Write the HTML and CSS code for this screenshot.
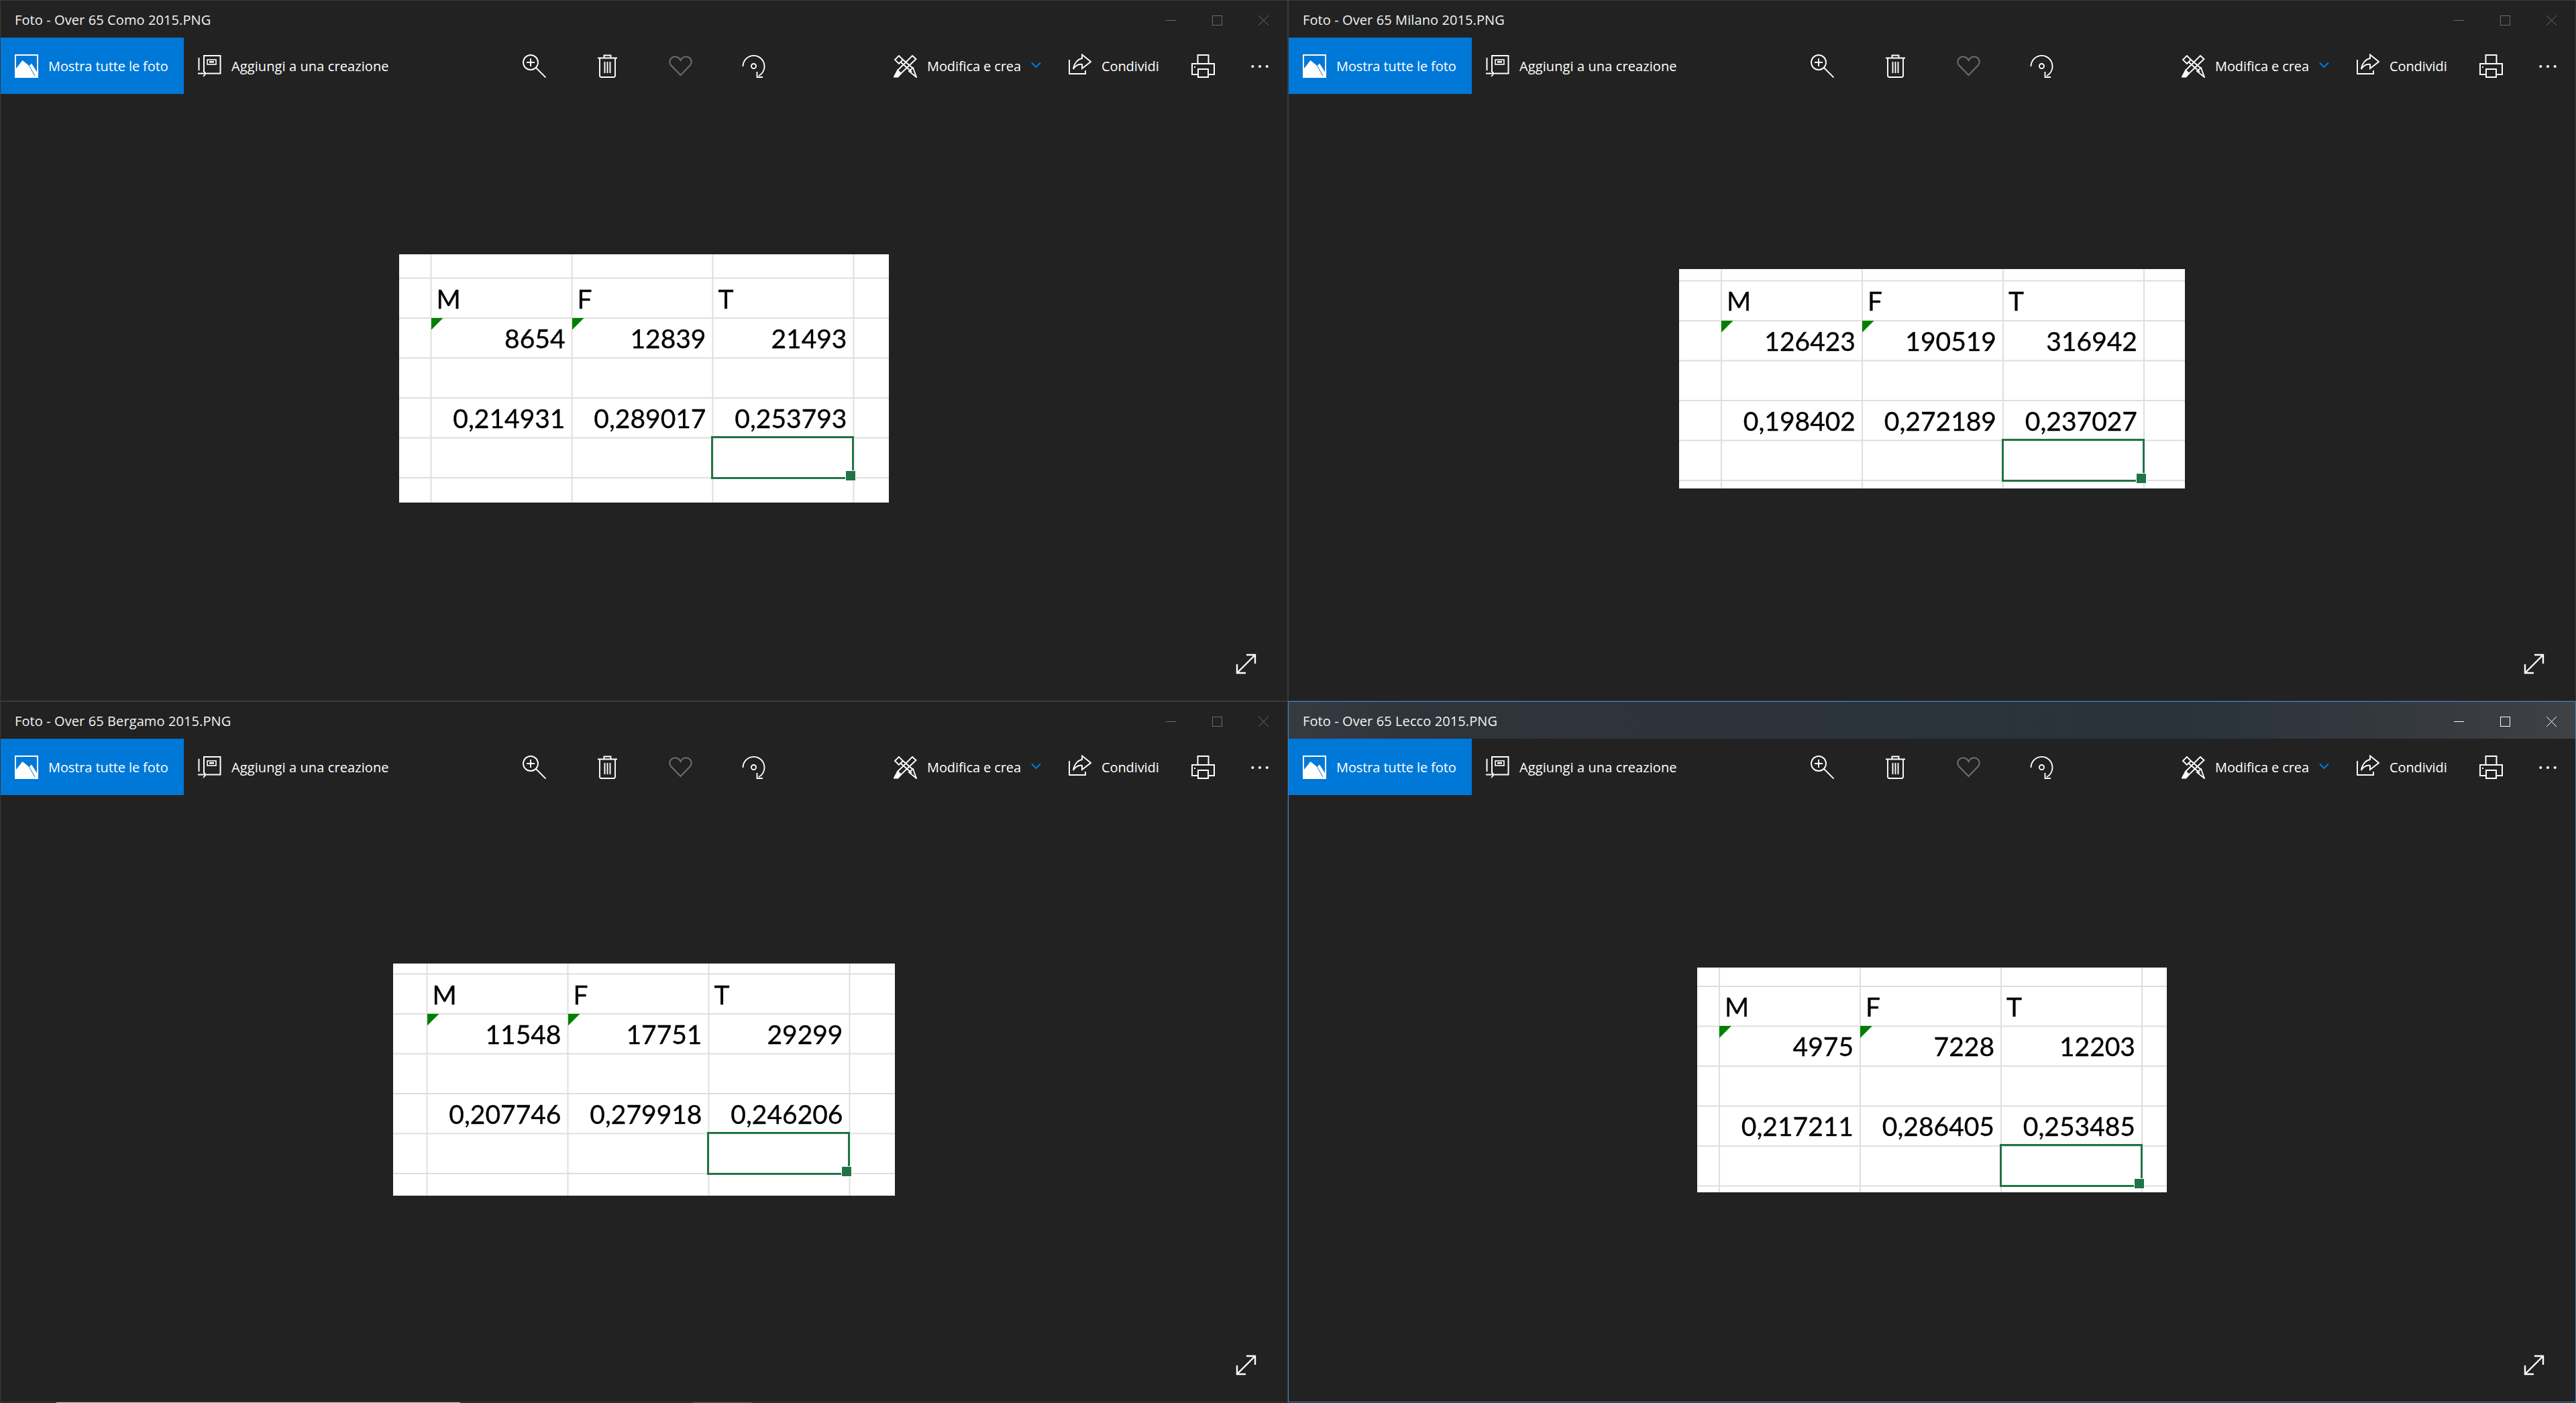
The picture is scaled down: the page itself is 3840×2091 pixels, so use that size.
FILE: index.html
```html
<!DOCTYPE html>
<html lang="it">
<head>
<meta charset="utf-8">
<title>Foto</title>
<link rel="stylesheet" href="styles.css">
</head>
<body>
<svg class="defs" aria-hidden="true">
  <symbol id="i-photos" viewBox="0 0 35 35">
    <rect width="35" height="35" fill="#fff"/>
    <polygon points="2,2 33,2 33,26 25,13.5 21.5,17 11.5,9 2,21" fill="#0078d7"/>
    <line x1="20" y1="14.5" x2="30" y2="32" stroke="#0078d7" stroke-width="1"/>
  </symbol>
  <symbol id="i-add" viewBox="0 0 35 35">
    <path d="M9 25V2H33.500V28.500H13M1.500 5V24" fill="none" stroke="#fff" stroke-width="2"/>
    <rect x="14" y="8" width="13" height="7" fill="none" stroke="#fff" stroke-width="1.600"/>
    <rect x="17" y="10" width="7" height="2.500" fill="#fff"/>
    <path d="M0 28.500H12M8 24.500L12 28.500L8 33" fill="none" stroke="#fff" stroke-width="1.800"/>
  </symbol>
  <symbol id="i-zoom" viewBox="0 0 35 35">
    <g fill="none" stroke="#fff" stroke-width="1.900">
      <circle cx="12" cy="12" r="11"/>
      <path d="M12 6V18M6 12H18M20 20L34.500 34.500"/>
    </g>
  </symbol>
  <symbol id="i-trash" viewBox="0 0 29 35">
    <g fill="none" stroke="#fff" stroke-width="1.900">
      <path d="M0 5.500H29M9.500 5V1.500H19.500V5"/>
      <path d="M3 5.500V31.500Q3 34 5.500 34H23.500Q26 34 26 31.500V5.500"/>
      <path d="M10.500 11V28M14.500 11V28M18.500 11V28"/>
    </g>
  </symbol>
  <symbol id="i-heart" viewBox="0 0 35 31">
    <path d="M17.500 29L3 14C-1.500 7.500 4 1 10 1.500C13 1.700 16 3.800 17.500 7C19 3.800 22 1.700 25 1.500C31 1 36.500 7.500 32 14Z" fill="none" stroke="#6e6e6e" stroke-width="2"/>
  </symbol>
  <symbol id="i-rotate" viewBox="0 0 35 35">
    <g fill="none" stroke="#fff" stroke-width="1.900">
      <path d="M1.500 18A16 16 0 1 1 25 32"/>
      <path d="M22.500 26V34H31"/>
      <circle cx="17.500" cy="17.500" r="3.500"/>
    </g>
  </symbol>
  <symbol id="i-edit" viewBox="0 0 35 35">
    <g fill="none" stroke="#fff" stroke-width="1.900">
      <path d="M28 2L33.500 7L11 28.500L6 24Z"/>
      <path d="M6 24L11 28.500L6.500 33.500H1Z" fill="#fff"/>
      <path d="M2 8L8 2L14 8L8 14Z"/>
      <path d="M10.500 11.500L27 26M14 8L29 21"/>
      <path d="M23 25L29 20L34 34Z"/>
    </g>
  </symbol>
  <symbol id="i-share" viewBox="0 0 34 31">
    <g fill="none" stroke="#fff" stroke-width="1.900">
      <path d="M1 9V30H25V25"/>
      <path d="M7 23C8 14 14 8 20 7V1.500L33 12L20 22V16C14 15 10 18 7 23Z"/>
    </g>
  </symbol>
  <symbol id="i-print" viewBox="0 0 35 35">
    <g fill="none" stroke="#fff" stroke-width="2">
      <path d="M9.500 14V1H25.500V14"/>
      <rect x="1" y="14" width="33" height="16"/>
      <rect x="10" y="22" width="15" height="12" fill="#222"/>
    </g>
    <rect x="4" y="18" width="2" height="2" fill="#fff"/>
  </symbol>
  <symbol id="i-chevron" viewBox="0 0 15 10">
    <path d="M1 1.500L7.500 8L14 1.500" fill="none" stroke="#0078d7" stroke-width="2.200"/>
  </symbol>
  <symbol id="i-dots" viewBox="0 0 26 6">
    <circle cx="2.300" cy="3" r="2.100" fill="#fff"/>
    <circle cx="13" cy="3" r="2.100" fill="#fff"/>
    <circle cx="23.700" cy="3" r="2.100" fill="#fff"/>
  </symbol>
  <symbol id="i-expand" viewBox="0 0 31 31">
    <path d="M2 29L29 2M16 2H29V15M2 16V29H15" fill="none" stroke="#fff" stroke-width="2.400"/>
  </symbol>
  <symbol id="i-min" viewBox="0 0 15 15"><path d="M0 7.500H15" fill="none" stroke="currentColor"/></symbol>
  <symbol id="i-max" viewBox="0 0 15 15"><rect x=".5" y=".5" width="14" height="14" fill="none" stroke="currentColor"/></symbol>
  <symbol id="i-close" viewBox="0 0 15 15"><path d="M0 0L15 15M15 0L0 15" fill="none" stroke="currentColor"/></symbol>
</svg>

<main class="desktop">

  <section class="window">
    <header class="titlebar">
      <span class="title">Foto - Over 65 Como 2015.PNG</span>
      <div class="caption">
        <span class="cap"><svg class="ic-cap"><use href="#i-min"/></svg></span>
        <span class="cap"><svg class="ic-cap"><use href="#i-max"/></svg></span>
        <span class="cap"><svg class="ic-cap"><use href="#i-close"/></svg></span>
      </div>
    </header>
    <nav class="toolbar">
      <a class="tool tool-all"><svg class="ic35"><use href="#i-photos"/></svg><span class="label">Mostra tutte le foto</span></a>
      <a class="tool tool-add"><svg class="ic35"><use href="#i-add"/></svg><span class="label">Aggiungi a una creazione</span></a>
      <a class="btn btn-first"><svg class="ic35"><use href="#i-zoom"/></svg></a>
      <a class="btn"><svg class="ic-trash"><use href="#i-trash"/></svg></a>
      <a class="btn"><svg class="ic-heart"><use href="#i-heart"/></svg></a>
      <a class="btn"><svg class="ic35"><use href="#i-rotate"/></svg></a>
      <a class="tool tool-edit"><svg class="ic35"><use href="#i-edit"/></svg><span class="label">Modifica e crea</span><svg class="ic-chevron"><use href="#i-chevron"/></svg></a>
      <a class="tool tool-share"><svg class="ic-share"><use href="#i-share"/></svg><span class="label">Condividi</span></a>
      <a class="btn btn-print"><svg class="ic35"><use href="#i-print"/></svg></a>
      <a class="btn btn-more"><svg class="ic-dots"><use href="#i-dots"/></svg></a>
    </nav>
    <div class="stage">
      <div class="sheet sheet-como">
        <span class="cell head col-m">M</span><span class="cell head col-f">F</span><span class="cell head col-t">T</span>
        <span class="cell num col-m flagged">8654</span><span class="cell num col-f flagged">12839</span><span class="cell num col-t">21493</span>
        <span class="cell ratio col-m">0,214931</span><span class="cell ratio col-f">0,289017</span><span class="cell ratio col-t">0,253793</span>
        <span class="selected"></span>
      </div>
      <svg class="expand"><use href="#i-expand"/></svg>
    </div>
  </section>

  <section class="window">
    <header class="titlebar">
      <span class="title">Foto - Over 65 Milano 2015.PNG</span>
      <div class="caption">
        <span class="cap"><svg class="ic-cap"><use href="#i-min"/></svg></span>
        <span class="cap"><svg class="ic-cap"><use href="#i-max"/></svg></span>
        <span class="cap"><svg class="ic-cap"><use href="#i-close"/></svg></span>
      </div>
    </header>
    <nav class="toolbar">
      <a class="tool tool-all"><svg class="ic35"><use href="#i-photos"/></svg><span class="label">Mostra tutte le foto</span></a>
      <a class="tool tool-add"><svg class="ic35"><use href="#i-add"/></svg><span class="label">Aggiungi a una creazione</span></a>
      <a class="btn btn-first"><svg class="ic35"><use href="#i-zoom"/></svg></a>
      <a class="btn"><svg class="ic-trash"><use href="#i-trash"/></svg></a>
      <a class="btn"><svg class="ic-heart"><use href="#i-heart"/></svg></a>
      <a class="btn"><svg class="ic35"><use href="#i-rotate"/></svg></a>
      <a class="tool tool-edit"><svg class="ic35"><use href="#i-edit"/></svg><span class="label">Modifica e crea</span><svg class="ic-chevron"><use href="#i-chevron"/></svg></a>
      <a class="tool tool-share"><svg class="ic-share"><use href="#i-share"/></svg><span class="label">Condividi</span></a>
      <a class="btn btn-print"><svg class="ic35"><use href="#i-print"/></svg></a>
      <a class="btn btn-more"><svg class="ic-dots"><use href="#i-dots"/></svg></a>
    </nav>
    <div class="stage">
      <div class="sheet sheet-milano">
        <span class="cell head col-m">M</span><span class="cell head col-f">F</span><span class="cell head col-t">T</span>
        <span class="cell num col-m flagged">126423</span><span class="cell num col-f flagged">190519</span><span class="cell num col-t">316942</span>
        <span class="cell ratio col-m">0,198402</span><span class="cell ratio col-f">0,272189</span><span class="cell ratio col-t">0,237027</span>
        <span class="selected"></span>
      </div>
      <svg class="expand"><use href="#i-expand"/></svg>
    </div>
  </section>

  <section class="window">
    <header class="titlebar">
      <span class="title">Foto - Over 65 Bergamo 2015.PNG</span>
      <div class="caption">
        <span class="cap"><svg class="ic-cap"><use href="#i-min"/></svg></span>
        <span class="cap"><svg class="ic-cap"><use href="#i-max"/></svg></span>
        <span class="cap"><svg class="ic-cap"><use href="#i-close"/></svg></span>
      </div>
    </header>
    <nav class="toolbar">
      <a class="tool tool-all"><svg class="ic35"><use href="#i-photos"/></svg><span class="label">Mostra tutte le foto</span></a>
      <a class="tool tool-add"><svg class="ic35"><use href="#i-add"/></svg><span class="label">Aggiungi a una creazione</span></a>
      <a class="btn btn-first"><svg class="ic35"><use href="#i-zoom"/></svg></a>
      <a class="btn"><svg class="ic-trash"><use href="#i-trash"/></svg></a>
      <a class="btn"><svg class="ic-heart"><use href="#i-heart"/></svg></a>
      <a class="btn"><svg class="ic35"><use href="#i-rotate"/></svg></a>
      <a class="tool tool-edit"><svg class="ic35"><use href="#i-edit"/></svg><span class="label">Modifica e crea</span><svg class="ic-chevron"><use href="#i-chevron"/></svg></a>
      <a class="tool tool-share"><svg class="ic-share"><use href="#i-share"/></svg><span class="label">Condividi</span></a>
      <a class="btn btn-print"><svg class="ic35"><use href="#i-print"/></svg></a>
      <a class="btn btn-more"><svg class="ic-dots"><use href="#i-dots"/></svg></a>
    </nav>
    <div class="stage">
      <div class="sheet sheet-bergamo">
        <span class="cell head col-m">M</span><span class="cell head col-f">F</span><span class="cell head col-t">T</span>
        <span class="cell num col-m flagged">11548</span><span class="cell num col-f flagged">17751</span><span class="cell num col-t">29299</span>
        <span class="cell ratio col-m">0,207746</span><span class="cell ratio col-f">0,279918</span><span class="cell ratio col-t">0,246206</span>
        <span class="selected"></span>
      </div>
      <svg class="expand"><use href="#i-expand"/></svg>
    </div>
  </section>

  <section class="window window-active">
    <header class="titlebar">
      <span class="title">Foto - Over 65 Lecco 2015.PNG</span>
      <div class="caption">
        <span class="cap"><svg class="ic-cap"><use href="#i-min"/></svg></span>
        <span class="cap"><svg class="ic-cap"><use href="#i-max"/></svg></span>
        <span class="cap"><svg class="ic-cap"><use href="#i-close"/></svg></span>
      </div>
    </header>
    <nav class="toolbar">
      <a class="tool tool-all"><svg class="ic35"><use href="#i-photos"/></svg><span class="label">Mostra tutte le foto</span></a>
      <a class="tool tool-add"><svg class="ic35"><use href="#i-add"/></svg><span class="label">Aggiungi a una creazione</span></a>
      <a class="btn btn-first"><svg class="ic35"><use href="#i-zoom"/></svg></a>
      <a class="btn"><svg class="ic-trash"><use href="#i-trash"/></svg></a>
      <a class="btn"><svg class="ic-heart"><use href="#i-heart"/></svg></a>
      <a class="btn"><svg class="ic35"><use href="#i-rotate"/></svg></a>
      <a class="tool tool-edit"><svg class="ic35"><use href="#i-edit"/></svg><span class="label">Modifica e crea</span><svg class="ic-chevron"><use href="#i-chevron"/></svg></a>
      <a class="tool tool-share"><svg class="ic-share"><use href="#i-share"/></svg><span class="label">Condividi</span></a>
      <a class="btn btn-print"><svg class="ic35"><use href="#i-print"/></svg></a>
      <a class="btn btn-more"><svg class="ic-dots"><use href="#i-dots"/></svg></a>
    </nav>
    <div class="stage">
      <div class="sheet sheet-lecco">
        <span class="cell head col-m">M</span><span class="cell head col-f">F</span><span class="cell head col-t">T</span>
        <span class="cell num col-m flagged">4975</span><span class="cell num col-f flagged">7228</span><span class="cell num col-t">12203</span>
        <span class="cell ratio col-m">0,217211</span><span class="cell ratio col-f">0,286405</span><span class="cell ratio col-t">0,253485</span>
        <span class="selected"></span>
      </div>
      <svg class="expand"><use href="#i-expand"/></svg>
    </div>
  </section>

</main>
<div class="taskbar-edge"></div>
</body>
</html>
```
FILE: styles.css
```css
* { box-sizing: border-box; }

html, body {
  margin: 0;
  width: 3840px;
  height: 2091px;
  overflow: hidden;
  background: #1a1a1a;
}

.defs { width: 0; height: 0; display: block; }

.desktop {
  display: grid;
  grid-template-columns: 1920px 1920px;
  grid-template-rows: 1045px 1045px;
}

.taskbar-edge {
  height: 1px;
  background: linear-gradient(90deg,
    #2a221c 0 84px, #cfcfcf 84px 686px, #2a221c 686px 1033px,
    #555 1033px 1120px, #2a221c 1120px 100%);
}

/* window */
.window {
  display: flex;
  flex-direction: column;
  border: 1px solid #3a3a3a;
  background: #222;
  color: #fff;
  font-family: "Open Sans", "Noto Sans", sans-serif;
}

.window-active { border-color: #3b87c9; }

.titlebar {
  height: 55px;
  flex: none;
  display: flex;
  align-items: center;
  justify-content: space-between;
  padding-left: 21px;
  color: #6b6b6b;
}

.window-active .titlebar {
  color: #fff;
  background: linear-gradient(90deg, #353b41 0, #2e343a 10%, #2a333a 70%, #383b41 92%, #3f4145 100%);
}

.title {
  color: #f2f2f2;
  font-size: 20px;
  letter-spacing: 0.1px;
  padding-top: 2px;
}

.caption { display: flex; padding-right: 1px; }

.cap {
  width: 69px;
  height: 55px;
  display: flex;
  align-items: center;
  justify-content: center;
  padding-top: 4px;
}

.ic-cap { width: 15px; height: 15px; display: block; }

/* toolbar */
.toolbar {
  height: 84px;
  flex: none;
  display: flex;
  align-items: center;
}

.tool {
  height: 84px;
  display: flex;
  align-items: center;
  padding-left: 21px;
  flex: none;
}

.label {
  font-size: 20px;
  letter-spacing: -0.1px;
  white-space: nowrap;
  display: block;
}

.tool-all { width: 273px; background: #0078d7; }
.tool-all .label { margin-left: 15px; }

.tool-add { width: 326px; }
.tool-add .label { margin-left: 15px; letter-spacing: 0.1px; }

.btn {
  width: 109px;
  height: 84px;
  flex: none;
  display: flex;
  align-items: center;
  justify-content: center;
}

.btn-first { margin-left: 142px; }

.tool-edit { width: 261px; margin-left: 133px; }
.tool-edit .label { margin-left: 15px; width: 140px; }

.tool-share { width: 178px; }
.tool-share .label { margin-left: 15px; }

.btn-print { width: 87px; }
.btn-more { width: 82px; }

.ic35 { width: 35px; height: 35px; display: block; flex: none; }
.ic-trash { width: 29px; height: 35px; display: block; }
.ic-heart { width: 35px; height: 31px; display: block; }
.ic-share { width: 34px; height: 31px; display: block; flex: none; margin-bottom: 5px; }
.ic-chevron { width: 15px; height: 10px; display: block; margin-left: 15px; flex: none; margin-top: -2px; }
.ic-dots { width: 26px; height: 6px; display: block; margin-top: 2px; }

/* image area */
.stage {
  flex: 1;
  position: relative;
  display: flex;
  align-items: center;
  justify-content: center;
  padding-bottom: 56px;
}

.expand {
  position: absolute;
  right: 46px;
  bottom: 39px;
  width: 31px;
  height: 31px;
}

/* spreadsheet screenshot */
.sheet {
  --grid: #dedede;
  flex: none;
  display: grid;
  grid-template-columns: var(--x) repeat(3, 210px) 1fr;
  grid-template-rows: var(--y) repeat(5, 59.5px) 1fr;
  color: #000;
  font-family: Lato, "Liberation Sans", sans-serif;
  font-size: 39px;
  background-color: #fff;
  background-image:
    linear-gradient(90deg, var(--grid) 2px, transparent 2px),
    linear-gradient(180deg, var(--grid) 2px, transparent 2px);
  background-size: 210px 100%, 100% 59.5px;
  background-position: var(--x) 0, 0 var(--y);
  background-repeat: repeat-x, repeat-y;
}

.sheet-como    { width: 730px; height: 370px; --x: 46.5px; --y: 34.5px; }
.sheet-milano  { width: 754px; height: 327px; --x: 62px;   --y: 16.5px; }
.sheet-bergamo { width: 748px; height: 346px; --x: 49.5px; --y: 14.5px; }
.sheet-lecco   { width: 700px; height: 335px; --x: 32px;   --y: 27px; }

.cell {
  position: relative;
  align-self: stretch;
  display: flex;
  align-items: flex-end;
  line-height: 39px;
  padding-bottom: 8.5px;
  -webkit-text-stroke: 0.35px #000;
  filter: blur(0.4px);
}

.col-m { grid-column: 2; }
.col-f { grid-column: 3; }
.col-t { grid-column: 4; }

.head  { grid-row: 2; padding-left: 9px; }
.num   { grid-row: 3; justify-content: flex-end; padding-right: 9px; }
.ratio { grid-row: 5; justify-content: flex-end; padding-right: 9px; }

.flagged::before {
  content: "";
  position: absolute;
  left: 1px;
  top: 1px;
  width: 18px;
  height: 18px;
  background: #008000;
  clip-path: polygon(0 0, 100% 0, 0 100%);
}

.selected {
  grid-column: 4;
  grid-row: 6;
  position: relative;
  margin: -1.5px -1.5px -3px -1.5px;
  border: 3px solid #217346;
}

.selected::after {
  content: "";
  position: absolute;
  right: -6px;
  bottom: -6px;
  width: 14px;
  height: 14px;
  background: #217346;
  border: 1px solid #fff;
}
```
